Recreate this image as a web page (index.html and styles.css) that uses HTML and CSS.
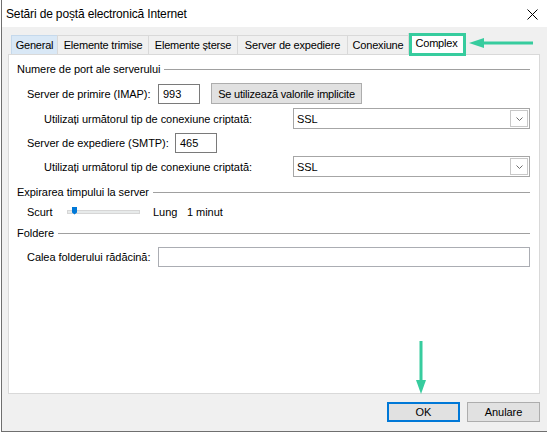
FILE: index.html
```html
<!DOCTYPE html>
<html lang="ro">
<head>
<meta charset="utf-8">
<title>Setări de poștă electronică Internet</title>
<link rel="stylesheet" href="styles.css">
</head>
<body>
<div class="window">
  <div class="titlebar">
    <span class="title">Setări de poștă electronică Internet</span>
    <svg class="close" width="11" height="11" viewBox="0 0 11 11"><path d="M0.5 0.5 L10.5 10.5 M10.5 0.5 L0.5 10.5" stroke="#000" stroke-width="1" fill="none"/></svg>
  </div>
  <div class="client">
    <div class="tabs">
      <div class="tab t-general hover">General</div>
      <div class="tab t-sent">Elemente trimise</div>
      <div class="tab t-deleted">Elemente șterse</div>
      <div class="tab t-outgoing">Server de expediere</div>
      <div class="tab t-conn">Conexiune</div>
      <div class="tab t-adv active">Complex</div>
    </div>
    <div class="panel">
      <div class="group-head g1">Numere de port ale serverului</div>
      <div class="row r-imap">
        <span class="lbl l-imap">Server de primire (IMAP):</span>
        <span class="input port">993</span>
        <span class="btn b-defaults">Se utilizează valorile implicite</span>
      </div>
      <div class="row r-enc r-enc1">
        <span class="lbl l-enc">Utilizați următorul tip de conexiune criptată:</span>
        <span class="select"><span class="sel-text">SSL</span><span class="drop"><svg width="7" height="4" viewBox="0 0 7 4"><path d="M0.5 0.5 L3.5 3.5 L6.5 0.5" stroke="#6d6d6d" fill="none"/></svg></span></span>
      </div>
      <div class="row r-smtp">
        <span class="lbl l-smtp">Server de expediere (SMTP):</span>
        <span class="input port">465</span>
      </div>
      <div class="row r-enc r-enc2">
        <span class="lbl l-enc">Utilizați următorul tip de conexiune criptată:</span>
        <span class="select"><span class="sel-text">SSL</span><span class="drop"><svg width="7" height="4" viewBox="0 0 7 4"><path d="M0.5 0.5 L3.5 3.5 L6.5 0.5" stroke="#6d6d6d" fill="none"/></svg></span></span>
      </div>
      <div class="group-head g2">Expirarea timpului la server</div>
      <div class="row r-slider">
        <span class="lbl l-short">Scurt</span>
        <span class="track"><span class="thumb"></span></span>
        <span class="lbl l-long">Lung</span>
        <span class="lbl">1 minut</span>
      </div>
      <div class="group-head g3">Foldere</div>
      <div class="row r-folder">
        <span class="lbl l-imap">Calea folderului rădăcină:</span>
        <span class="input folder"></span>
      </div>
    </div>
    <div class="footer">
      <span class="btn b-ok">OK</span>
      <span class="btn b-cancel">Anulare</span>
    </div>
  </div>
</div>
<div class="mark-box"></div>
<svg class="arrow-h" width="72" height="14" viewBox="466 36 72 14">
  <polygon points="469,43 484,38 484,48" fill="#37cc9e"/>
  <rect x="482" y="41.5" width="51" height="3" fill="#37cc9e"/>
</svg>
<svg class="arrow-v" width="16" height="58" viewBox="413 339 16 58">
  <rect x="419.5" y="341" width="3" height="42" fill="#37cc9e"/>
  <polygon points="421,394 416,380 426,380" fill="#37cc9e"/>
</svg>
</body>
</html>
```
FILE: styles.css
```css
html, body {
  margin: 0;
  padding: 0;
}
body {
  position: relative;
  width: 547px;
  height: 433px;
  overflow: hidden;
  background: #ffffff;
  font-family: "Liberation Sans", Arial, sans-serif;
  font-size: 11px;
  letter-spacing: -0.05px;
  color: #000;
}
.window {
  margin-left: 1px;
  width: 546px;
  height: 432px;
  box-sizing: border-box;
  border-left: 1px solid #6f6f6f;
  border-bottom: 1px solid #6f6f6f;
  display: flex;
  flex-direction: column;
  background: #f0f0f0;
}
.titlebar {
  flex: none;
  height: 27px;
  background: #fff;
  display: flex;
  align-items: center;
  justify-content: space-between;
  padding: 0 9px 0 4px;
}
.title {
  font-size: 12px;
  letter-spacing: -0.15px;
}
.close {
  display: block;
  margin-top: 1px;
}
.client {
  flex: 1;
  display: flex;
  flex-direction: column;
  padding: 6px 7px 0 6px;
}
.tabs {
  display: flex;
  align-items: flex-end;
  padding-left: 3px;
  letter-spacing: -0.2px;
}
.tab {
  box-sizing: border-box;
  height: 19px;
  border: 1px solid #d9d9d9;
  border-bottom: none;
  margin-right: -1px;
  background: #f0f0f0;
  display: flex;
  align-items: center;
  justify-content: center;
  white-space: nowrap;
}
.tab.hover { background: #d9e8f6; border-color: #c5d9ec; }
.t-general { width: 47px; }
.t-sent { width: 92px; }
.t-deleted { width: 90px; }
.t-outgoing { width: 111px; }
.t-conn { width: 62px; }
.t-adv { width: 57px; }
.tab.active {
  height: 22px;
  margin-bottom: -1px;
  background: #fff;
  position: relative;
  z-index: 1;
  padding-bottom: 3px;
}
.panel {
  flex: none;
  height: 340px;
  box-sizing: border-box;
  background: #fff;
  border: 1px solid #d9d9d9;
  padding: 7px 9px 0 8px;
}
.group-head {
  display: flex;
  align-items: center;
  height: 14px;
  white-space: nowrap;
}
.group-head::after {
  content: "";
  flex: 1;
  height: 1px;
  background: #a0a0a0;
  margin-left: 4px;
}
.g2 { margin-top: 8px; }
.g3 { margin-top: 7px; }
.row {
  display: flex;
  align-items: center;
  height: 21px;
  padding-left: 10px;
  white-space: nowrap;
}
.r-imap { margin-top: 7px; }
.r-enc { padding-left: 27px; }
.r-enc1 { margin-top: 4px; }
.r-smtp { margin-top: 3px; }
.r-enc2 { margin-top: 3px; }
.r-slider { margin-top: 5px; height: 15px; }
.r-folder { margin-top: 6px; }
.l-imap { width: 131px; }
.l-smtp { width: 148px; }
.l-enc { width: 249px; }
.l-short { width: 40px; }
.l-long { width: 34px; }
.input {
  box-sizing: border-box;
  height: 20px;
  border: 1px solid #7a7a7a;
  background: #fff;
  padding-left: 4px;
  display: flex;
  align-items: center;
}
.port { width: 42px; }
.folder { width: 372px; border-color: #abadb3; }
.btn {
  box-sizing: border-box;
  display: flex;
  align-items: center;
  justify-content: center;
  background: #e1e1e1;
  border: 1px solid #adadad;
}
.b-defaults {
  margin-left: 11px;
  width: 151px;
  height: 21px;
  letter-spacing: -0.2px;
}
.select {
  box-sizing: border-box;
  width: 237px;
  height: 21px;
  border: 1px solid #a6a6a6;
  background: #fff;
  display: flex;
  align-items: center;
  padding-left: 3px;
}
.sel-text { flex: 1; }
.drop {
  box-sizing: border-box;
  width: 18px;
  height: 17px;
  margin-right: 1px;
  border: 1px solid #c8c8c8;
  display: flex;
  align-items: center;
  justify-content: center;
}
.drop svg { display: block; }
.track {
  position: relative;
  box-sizing: border-box;
  width: 73px;
  height: 4px;
  margin-right: 13px;
  background: #e7eaea;
  border: 1px solid #d6d6d6;
}
.thumb {
  position: absolute;
  left: 4px;
  top: -4px;
  width: 5px;
  height: 8px;
  background: #0078d7;
  clip-path: polygon(0 0, 100% 0, 100% 75%, 50% 100%, 0 75%);
}
.footer {
  display: flex;
  justify-content: flex-end;
  gap: 7px;
  padding-top: 8px;
}
.b-ok, .b-cancel {
  width: 73px;
  height: 20px;
}
.b-ok {
  border: 2px solid #0078d7;
}
.mark-box {
  position: absolute;
  left: 409px;
  top: 33px;
  width: 57px;
  height: 23px;
  box-sizing: border-box;
  border: 3px solid #37cc9e;
  z-index: 2;
}
.arrow-h {
  position: absolute;
  left: 466px;
  top: 36px;
}
.arrow-v {
  position: absolute;
  left: 413px;
  top: 339px;
}
```
